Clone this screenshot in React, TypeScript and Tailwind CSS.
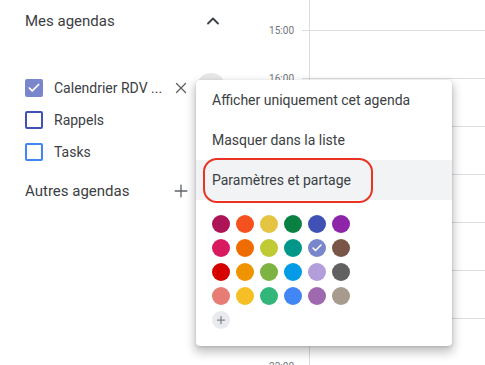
import { Check, ChevronUp, Plus, X } from "lucide-react"

const colors = [
  ["#ad1457", "#f4511e", "#e4c441", "#0b8043", "#3f51b5", "#8e24aa"],
  ["#d81b60", "#ef6c00", "#c0ca33", "#009688", "#7986cb", "#795548"],
  ["#d50000", "#f09300", "#7cb342", "#039be5", "#b39ddb", "#616161"],
  ["#e67c73", "#f6bf26", "#33b679", "#4285f4", "#9e69af", "#a79b8e"],
]

const hours = ["14:00", "15:00", "16:00", "17:00", "18:00", "19:00", "20:00", "21:00", "22:00"]

function Box({ color, checked }: { color: string; checked?: boolean }) {
  return (
    <div
      className="w-[18px] h-[18px] shrink-0 rounded-[2px] border-2 flex items-center justify-center"
      style={{ borderColor: color, background: checked ? color : "transparent" }}
    >
      {checked && <Check className="w-[14px] h-[14px] text-white" strokeWidth={3} />}
    </div>
  )
}

export default function App() {
  return (
    <div className="relative w-[485px] h-[365px] overflow-hidden bg-white text-[#3c4043] font-['Roboto',sans-serif]">
      <div className="flex h-full">
        {/* Sidebar */}
        <div className="w-[250px] shrink-0 pl-[25px] pr-[10px]">
          <div className="flex items-center justify-between h-[42px] pr-[17px]">
            <span className="text-[15px]">Mes agendas</span>
            <ChevronUp className="w-[20px] h-[20px] text-[#3c4043]" strokeWidth={2.2} />
          </div>
          <div className="h-[30px]" />
          <div className="flex items-center h-[32px]">
            <Box color="#7986cb" checked />
            <span className="ml-[11px] text-[14px] w-[107px] whitespace-nowrap">Calendrier RDV ...</span>
            <X className="ml-[11px] w-[18px] h-[18px] shrink-0 text-[#5f6368]" strokeWidth={1.8} />
            <div className="ml-[6px] w-[30px] h-[30px] shrink-0 rounded-full bg-[#e8e8e8]" />
          </div>
          <div className="flex items-center h-[32px]">
            <Box color="#3f51b5" />
            <span className="ml-[11px] text-[14px]">Rappels</span>
          </div>
          <div className="flex items-center h-[32px]">
            <Box color="#4285f4" />
            <span className="ml-[11px] text-[14px]">Tasks</span>
          </div>
          <div className="flex items-center justify-between h-[46px] pr-[49px]">
            <span className="text-[15px]">Autres agendas</span>
            <Plus className="w-[20px] h-[20px] text-[#5f6368]" strokeWidth={1.6} />
          </div>
        </div>

        {/* Time gutter */}
        <div className="w-[59px] shrink-0 mt-[-18px]">
          {hours.map((h, i) => (
            <div key={h} className="relative h-[48px]">
              {i > 0 && (
                <span className="absolute right-[15px] top-[-7px] text-[10px] text-[#70757a]">{h}</span>
              )}
              <div className="absolute right-0 top-0 w-[7px] border-t border-[#dadce0]" />
            </div>
          ))}
        </div>

        {/* Day column */}
        <div className="flex-1 border-l border-[#dadce0] mt-[-18px]">
          {hours.map((h) => (
            <div key={h} className="h-[48px] border-t border-[#dadce0]" />
          ))}
        </div>
      </div>

      {/* Context menu */}
      <div className="absolute left-[196px] top-[80px] w-[256px] h-[266px] bg-white rounded-[4px] shadow-[0_5px_10px_2px_rgba(0,0,0,0.22),0_1px_3px_rgba(0,0,0,0.15)]">
        <div className="h-[40px] flex items-center px-[16px] text-[14px] text-[#3c4043]">
          Afficher uniquement cet agenda
        </div>
        <div className="h-[40px] flex items-center px-[16px] text-[14px] text-[#3c4043]">
          Masquer dans la liste
        </div>
        <div className="relative h-[40px] flex items-center px-[16px] text-[14px] text-[#3c4043] bg-[#f1f3f4]">
          Paramètres et partage
          <div className="absolute left-[7px] top-[-2px] w-[170px] h-[45px] border-2 border-[#ea3323] rounded-[14px]" />
        </div>
        <div className="pt-[15px] pl-[16px] flex flex-col gap-[6px]">
          {colors.map((row, i) => (
            <div key={i} className="flex gap-[6px]">
              {row.map((c) => (
                <div
                  key={c}
                  className="w-[18px] h-[18px] rounded-full flex items-center justify-center"
                  style={{ background: c }}
                >
                  {c === "#7986cb" && <Check className="w-[12px] h-[12px] text-white" strokeWidth={3} />}
                </div>
              ))}
            </div>
          ))}
          <div className="w-[18px] h-[18px] rounded-full bg-[#e8eaed] flex items-center justify-center">
            <Plus className="w-[12px] h-[12px] text-[#80868b]" strokeWidth={2.5} />
          </div>
        </div>
      </div>
    </div>
  )
}
